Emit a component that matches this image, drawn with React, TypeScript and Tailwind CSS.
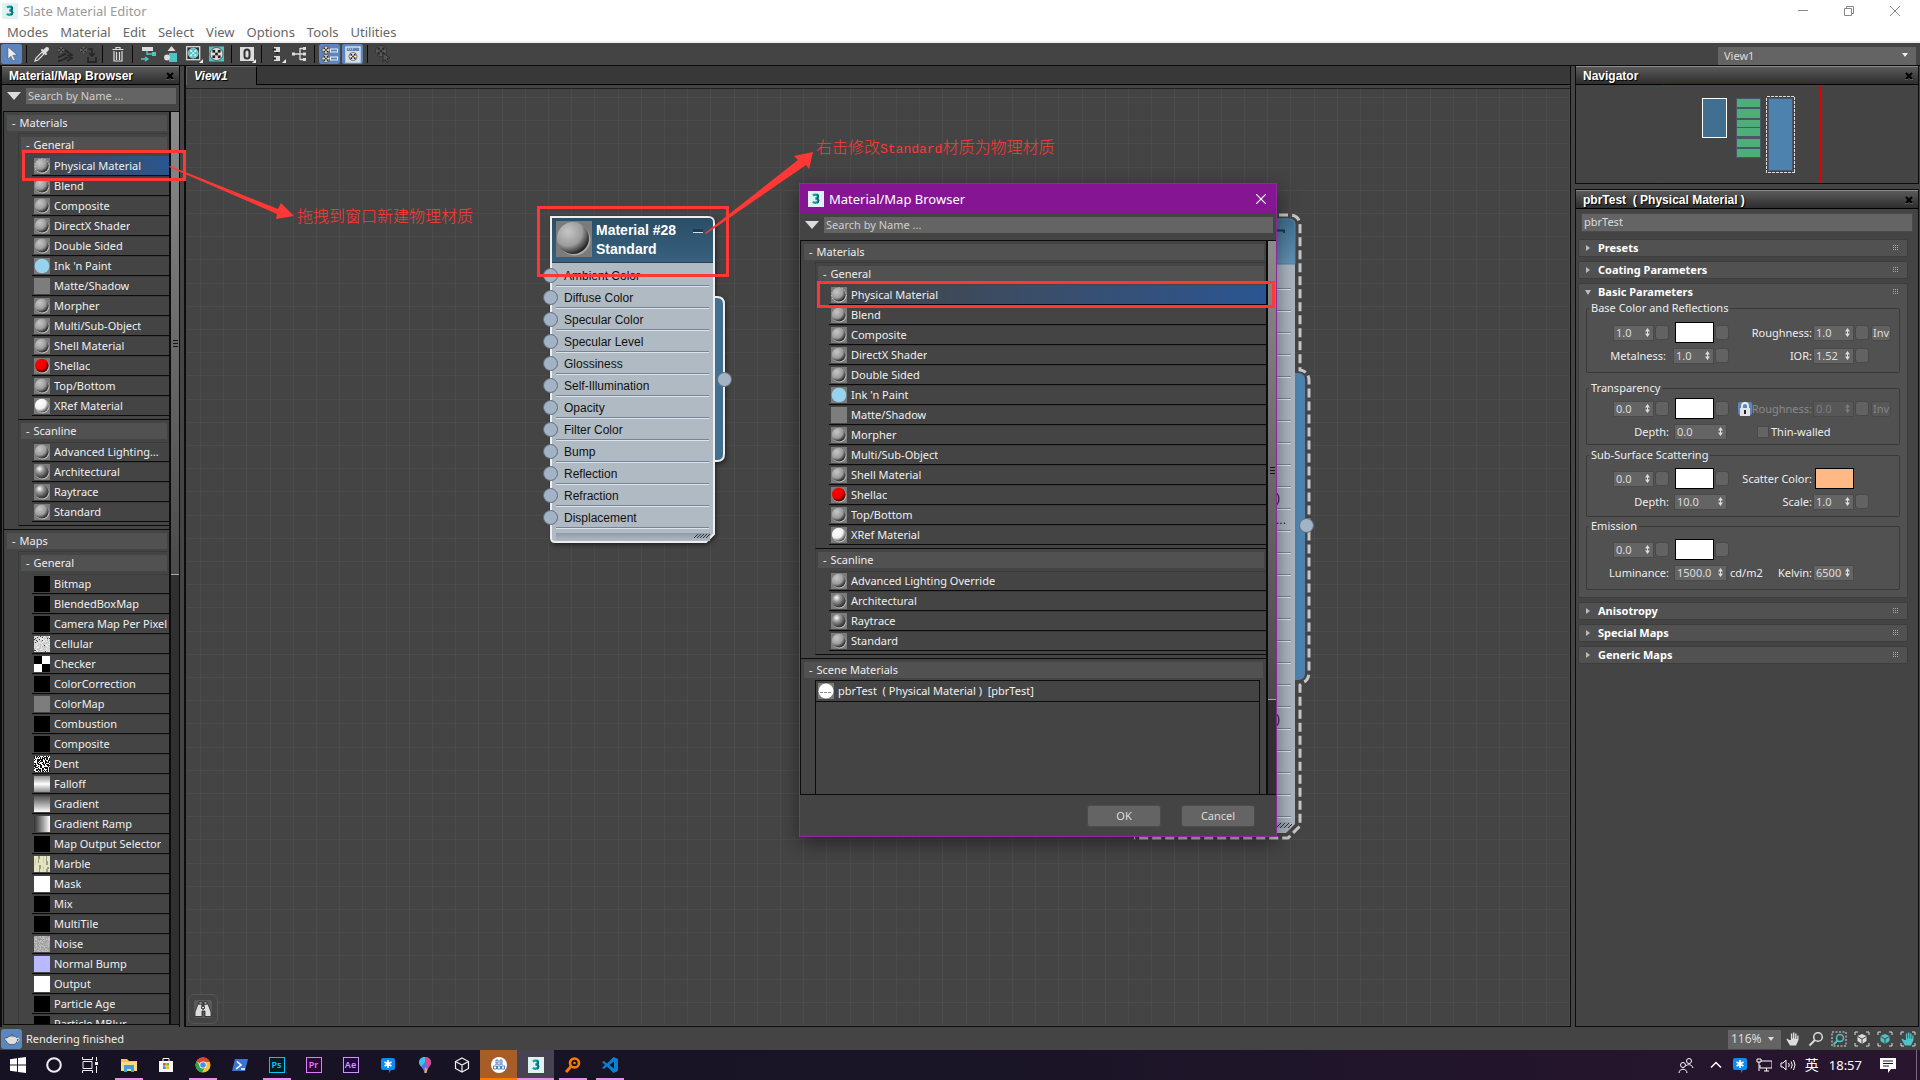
import React from "react";

const uiFont = "font-['Noto_Sans','Noto_Sans_CJK_SC',sans-serif]";
const arial = "font-['Liberation_Sans',sans-serif]";

type Item = [string, string];

const generalMaterials: Item[] = [
  ["Physical Material", "sphere-physical"],
  ["Blend", "sphere"],
  ["Composite", "sphere"],
  ["DirectX Shader", "sphere"],
  ["Double Sided", "sphere"],
  ["Ink 'n Paint", "ink"],
  ["Matte/Shadow", "gray"],
  ["Morpher", "sphere"],
  ["Multi/Sub-Object", "sphere"],
  ["Shell Material", "sphere"],
  ["Shellac", "sphere-red"],
  ["Top/Bottom", "sphere"],
  ["XRef Material", "sphere-white"],
];

const scanline = (first: string): Item[] => [
  [first, "sphere"],
  ["Architectural", "sphere-shiny"],
  ["Raytrace", "sphere-shiny"],
  ["Standard", "sphere"],
];

const maps: Item[] = [
  ["Bitmap", "black"],
  ["BlendedBoxMap", "black"],
  ["Camera Map Per Pixel", "black"],
  ["Cellular", "noise-cell"],
  ["Checker", "checker"],
  ["ColorCorrection", "black"],
  ["ColorMap", "gray"],
  ["Combustion", "black"],
  ["Composite", "black"],
  ["Dent", "noise-dent"],
  ["Falloff", "falloff"],
  ["Gradient", "gradient"],
  ["Gradient Ramp", "ramp"],
  ["Map Output Selector", "black"],
  ["Marble", "marble"],
  ["Mask", "white"],
  ["Mix", "black"],
  ["MultiTile", "black"],
  ["Noise", "noise-soft"],
  ["Normal Bump", "normal"],
  ["Output", "white"],
  ["Particle Age", "black"],
  ["Particle MBlur", "black"],
];

function Defs() {
  const ball = (id: string, a: string, b: string, c: string, mid = "0.6") => (
    <radialGradient id={id} cx="0.34" cy="0.3" r="0.74">
      <stop offset="0" stopColor={a} />
      <stop offset={mid} stopColor={b} />
      <stop offset="1" stopColor={c} />
    </radialGradient>
  );
  return (
    <svg className="absolute h-0 w-0" aria-hidden="true">
      <defs>
        {ball("ball", "#c6c6c6", "#9c9c9c", "#1c1c1c")}
        {ball("ballShiny", "#ffffff", "#9c9c9c", "#262626", "0.35")}
        {ball("ballWhite", "#ffffff", "#f0f0f0", "#444444")}
        {ball("ballRed", "#ff0000", "#ee0000", "#3a0000")}
      </defs>
    </svg>
  );
}

function Noise({ kind }: { kind: string }) {
  const cells: React.ReactElement[] = [];
  let seed = kind === "noise-dent" ? 7 : kind === "noise-cell" ? 31 : 83;
  for (let y = 0; y < 16; y++) {
    for (let x = 0; x < 16; x++) {
      seed = (seed * 48271) % 2147483647;
      const r = seed / 2147483647;
      let v = 0;
      if (kind === "noise-dent") v = r > 0.5 ? 245 : 20;
      else if (kind === "noise-cell") v = r > 0.93 ? 60 : 185 + r * 60;
      else v = 150 + r * 45;
      const g = Math.round(v);
      cells.push(<rect key={x + "-" + y} x={x} y={y} width="1" height="1" fill={`rgb(${g},${g},${g})`} />);
    }
  }
  return <>{cells}</>;
}

function Thumb({ kind }: { kind: string }) {
  const spheres: Record<string, string> = {
    sphere: "url(#ball)",
    "sphere-physical": "url(#ball)",
    "sphere-red": "url(#ballRed)",
    "sphere-white": "url(#ballWhite)",
    "sphere-shiny": "url(#ballShiny)",
  };
  if (kind === "falloff")
    return <span className="h-4 w-4 shrink-0 bg-linear-to-b from-[#8f8f8f] via-white to-[#8f8f8f]" />;
  if (kind === "gradient") return <span className="h-4 w-4 shrink-0 bg-linear-to-b from-[#555] to-white" />;
  if (kind === "ramp") return <span className="h-4 w-4 shrink-0 bg-linear-to-r from-[#333] to-white" />;
  return (
    <svg viewBox="0 0 16 16" className="h-4 w-4 shrink-0" shapeRendering={kind.startsWith("sphere") || kind === "ink" ? "auto" : "crispEdges"} aria-hidden="true">
      {kind in spheres && (
        <>
          <rect width="16" height="16" fill="#7b7b7b" />
          {kind === "sphere-physical" && <circle cx="8" cy="8" r="7.2" fill="none" stroke="#ddd" strokeDasharray="1.5 1.5" />}
          <circle cx="8.4" cy="8.4" r="7" fill="#c4c4c4" />
          <circle cx="7.8" cy="7.6" r="6.9" fill={spheres[kind]} />
        </>
      )}
      {kind === "ink" && (
        <>
          <rect width="16" height="16" fill="#7b7b7b" />
          <circle cx="8" cy="8" r="7.3" fill="#97d3ee" />
        </>
      )}
      {kind === "gray" && <rect width="16" height="16" fill="#7d7d7d" />}
      {kind === "black" && <rect width="16" height="16" fill="#000" />}
      {kind === "white" && <rect width="16" height="16" fill="#fff" />}
      {kind === "normal" && <rect width="16" height="16" fill="#b9b9ff" />}
      {kind === "checker" && (
        <>
          <rect width="16" height="16" fill="#fff" />
          <path d="M0 0h8v8H0zM8 8h8v8H8z" fill="#000" />
        </>
      )}
      {kind === "marble" && (
        <>
          <rect width="16" height="16" fill="#e4e4c0" />
          <path d="M4 0h2v3H5v4H4zM5 9h2v4H6v3H5zM12 0h1v5h1v4h-2zM13 11h2v2h-1v3h-2v-3h1z" fill="#9c9c80" />
          <path d="M1 3h1v6H1zM9 0h1v7H9zM9 10h1v5H9z" fill="#cfcfa6" />
        </>
      )}
      {kind.startsWith("noise") && <Noise kind={kind} />}
    </svg>
  );
}

function Row({ item, selected }: { item: Item; selected?: boolean }) {
  return (
    <button
      type="button"
      className={
        "flex h-5 w-full items-center border-b border-[#0c0c0c] pl-0.5 text-left " +
        (selected ? "bg-linear-to-r from-[#444] to-[#2a5592]" : "border-t border-t-[#3a3a3a]")
      }
    >
      <Thumb kind={item[1]} />
      <span className="ml-1 truncate leading-4 text-[#f0f0f0]">{item[0]}</span>
    </button>
  );
}

function Group({ title, items, selected }: { title: string; items: Item[]; selected?: boolean }) {
  return (
    <div className="border-b border-l border-[#0c0c0c] border-l-[#3a3a3a] py-[3px] pl-0.5">
      <button type="button" className="mr-0.5 flex h-4 w-[calc(100%-2px)] items-center gap-1 bg-[#515151] pl-[5px] leading-4 text-[#eee]">
        <span>-</span>
        <span>{title}</span>
      </button>
      <div className="mt-[3px] pl-[11px]">
        {items.map((it, i) => (
          <Row key={it[0]} item={it} selected={selected && i === 0} />
        ))}
      </div>
    </div>
  );
}

function Section({ title, children }: { title: string; children: React.ReactNode }) {
  return (
    <section className="border-b border-[#0c0c0c] py-[3px]">
      <button type="button" className="mx-[3px] flex h-4 w-[calc(100%-5px)] items-center gap-1 bg-[#515151] pl-[5px] leading-4 text-[#eee]">
        <span>-</span>
        <span>{title}</span>
      </button>
      <div className="mt-0.5 ml-3.5 border-t border-[#3a3a3a]">{children}</div>
    </section>
  );
}

function ScrollBar({ thumb }: { thumb: string }) {
  return (
    <div className="flex w-[9px] shrink-0 flex-col border-l border-[#0c0c0c] bg-[#303030]">
      <div className={"flex shrink-0 items-center justify-center border-b border-[#aaa] bg-linear-to-b from-[#8b8b8b] to-[#4a4a4a] " + thumb}>
        <svg viewBox="0 0 8 8" className="h-2 w-2" aria-hidden="true">
          <path d="M2 1.5h5M2 4.5h5M2 7.5h5" stroke="#111" />
        </svg>
      </div>
    </div>
  );
}

function Search({ id }: { id: string }) {
  return (
    <div className="flex h-[22px] items-center gap-[5px] pl-1">
      <button type="button" aria-label="Browser options" className="flex h-4 w-[15px] items-center justify-center">
        <svg viewBox="0 0 14 8" className="h-2 w-3.5" aria-hidden="true">
          <path d="M0 0h14L7 8z" fill="#dcdcdc" />
        </svg>
      </button>
      <input
        id={id}
        aria-label="Search by Name"
        placeholder="Search by Name ..."
        className="h-4 min-w-0 flex-1 bg-[#646464] px-0.5 leading-4 outline-none placeholder:text-[#cfcfcf]"
      />
    </div>
  );
}

function PanelTitle({ children }: { children: React.ReactNode }) {
  return (
    <header className={"flex h-[19px] shrink-0 items-center justify-between border-t border-b border-t-[#8a8a8a] border-b-black bg-linear-to-b from-[#5a5a5a] to-[#2e2e2e] pr-[3px] pl-[7px] " + arial}>
      <h2 className="text-[12px] leading-4 font-bold whitespace-pre text-white [text-shadow:1px_1px_1px_#000]">{children}</h2>
      <button type="button" aria-label="Close panel" className="flex h-3 w-3 items-center justify-center">
        <svg viewBox="0 0 8 8" className="h-2 w-2" aria-hidden="true">
          <path d="M1 1l6 6M7 1L1 7" stroke="#000" strokeWidth="2" />
          <path d="M0 7.7h3M5 7.7h3" stroke="#999" strokeWidth="0.5" />
        </svg>
      </button>
    </header>
  );
}

function MaxGlyph() {
  return (
    <>
      <rect width="16" height="16" fill="#dff1f1" />
      <path d="M5 4.6C6.2 3.4 9.6 3 9.8 5.300 9.900 7 8.500 7.400 7.200 7.400 9 7.400 10.300 8 10.200 9.700 10 12 6.500 12.200 4.800 10.900" fill="none" stroke="#11a09d" strokeWidth="2.4" />
      <path d="M9 3.200c1.800 1 1.700 3.200.3 4.200 1.700 1 1.700 3.700-.2 4.600" fill="none" stroke="#0b6a70" strokeWidth="1.6" />
    </>
  );
}

function MaxLogo() {
  return (
    <svg viewBox="0 0 16 16" className="h-4 w-4" aria-hidden="true">
      <MaxGlyph />
    </svg>
  );
}

function Sep() {
  return <span className="mx-[3px] h-[18px] w-px shrink-0 bg-[#0a0a0a]" />;
}

function Tool({ label, active, children }: { label: string; active?: boolean; children: React.ReactNode }) {
  return (
    <button type="button" aria-label={label} className={"flex h-5 w-[23px] shrink-0 items-center justify-center rounded-[3px] " + (active ? "border-x border-[#444] bg-[#5b86c0]" : "")}>
      <svg viewBox="0 0 18 18" className="h-[18px] w-[18px] shrink-0" fill="none" aria-hidden="true">
        {children}
      </svg>
    </button>
  );
}

function CheckBall({ x, y, r, on = "#ddd", off = "#222" }: { x: number; y: number; r: number; on?: string; off?: string }) {
  const k = r * 0.42;
  return (
    <g>
      <circle cx={x} cy={y} r={r} fill={on} stroke={off} strokeWidth="0.6" />
      {[[-1, -1], [1, -1], [0, 0], [-1, 1], [1, 1]].map(([a, b]) => (
        <rect key={a + "," + b} x={x + a * k - k / 2} y={y + b * k - k / 2} width={k} height={k} fill={off} />
      ))}
    </g>
  );
}

function Toolbar() {
  return (
    <div className="flex h-[22px] items-center bg-[#444] pr-1">
      <Tool label="Select" active>
        <path d="M5 2l9 8-4.2.3 2.3 4.5-2 1-2.2-4.6L5 14z" fill="#eee" stroke="#555" strokeWidth="0.5" />
      </Tool>
      <Sep />
      <Tool label="Pick material">
        <path d="M2 16l1-3 6-6 2 2-6 6z" stroke="#ddd" strokeWidth="1.2" />
        <path d="M9 5l4 4" stroke="#ddd" strokeWidth="2" strokeLinecap="round" />
        <path d="M11.5 6.5L14 4" stroke="#ddd" strokeWidth="4" strokeLinecap="round" />
      </Tool>
      <Tool label="Put to scene">
        <CheckBall x={5} y={5} r={4} on="#666" off="#262626" />
        <path d="M2 16c5 0 6-3 9-3M2 12c4 0 5-3 8-3M9 5l4 3M10 6l6 4-6 3M11 10l5 3-5 3" stroke="#262626" strokeWidth="1.8" />
      </Tool>
      <Tool label="Assign to selection">
        <CheckBall x={4.500} y={5} r={4} on="#666" off="#262626" />
        <path d="M9 4h4v6M10 8l3 3 3-3" stroke="#262626" strokeWidth="1.6" />
        <path d="M9 12v5h8V12" stroke="#262626" strokeWidth="1.8" />
      </Tool>
      <Sep />
      <Tool label="Delete">
        <path d="M3.5 4.500h11M7 4V2.500h4V4M5 6v10h8V6M7.500 7v8M10.500 7v8" stroke="#ddd" strokeWidth="1.2" />
      </Tool>
      <Sep />
      <Tool label="Move children">
        <path d="M3 2h11v4H3z" fill="#ddd" />
        <path d="M8 6v4M8 9h5M2 14h6M6 12l3 2-3 2" stroke="#4fc3c3" strokeWidth="1.4" />
        <path d="M13 7h4v4h-4z" fill="#4fc3c3" />
      </Tool>
      <Tool label="Hide unused slots">
        <path d="M9.500 1l4 5h-8z" fill="#ddd" />
        <path d="M7 8h8v9H7z" fill="#4fc3c3" />
        <circle cx="5" cy="12.500" r="3" fill="#ddd" />
      </Tool>
      <Tool label="Show shaded material">
        <rect x="1.700" y="1.700" width="13" height="13" fill="#333" stroke="#ddd" strokeWidth="1.300" />
        <CheckBall x={8.200} y={8.200} r={5} on="#4fc3c3" off="#c8f0f0" />
        <path d="M18 14v4h-4z" fill="#eee" />
      </Tool>
      <Tool label="Show background">
        <rect x="1" y="1.500" width="15" height="15" fill="#4fc3c3" />
        <CheckBall x={8.500} y={9} r={6.500} on="#ddd" off="#222" />
      </Tool>
      <Sep />
      <Tool label="Material ID channel">
        <rect x="2" y="2" width="14" height="14" fill="#ddd" />
        <rect x="6.500" y="4.500" width="5" height="9" rx="2.500" stroke="#333" strokeWidth="2" />
        <path d="M18 14v4h-4z" fill="#eee" />
      </Tool>
      <Sep />
      <Tool label="Lay out all">
        <path d="M6 2h6v5H6zM6 11h6v5H6z" fill="#ddd" />
        <path d="M5 4.500h3M5 13.500h3M9 7v2" stroke="#222" strokeWidth="2" />
        <path d="M18 14v4h-4z" fill="#eee" />
      </Tool>
      <Tool label="Lay out children">
        <path d="M3 9h6M9 3.500h3M9 9h3M9 14.500h3M9 3v12" stroke="#ddd" strokeWidth="1.300" />
        <path d="M1 7.500h3v3H1zM12 2h3v3h-3zM12 7.500h3v3h-3zM12 13h3v3h-3z" fill="#ddd" />
      </Tool>
      <Sep />
      <Tool label="Material/Map Browser" active>
        <CheckBall x={5} y={5} r={4} />
        <CheckBall x={5} y={13.500} r={4} />
        <rect x="9.500" y="4" width="7" height="3" stroke="#eee" />
        <rect x="9.500" y="12" width="7" height="3" stroke="#eee" />
      </Tool>
      <Tool label="Parameter Editor" active>
        <rect x="2" y="2" width="14" height="15" stroke="#eee" strokeWidth="1.300" />
        <path d="M2 6h14v11H2z" fill="#ddd" />
        <path d="M4 4h6" stroke="#eee" strokeDasharray="1 1" />
        <CheckBall x={9} y={11.500} r={4} on="#eee" off="#222" />
      </Tool>
      <Sep />
      <Tool label="Select by material">
        <CheckBall x={7} y={6} r={5.500} on="#5a5a5a" off="#262626" />
        <path d="M9 8l7 5-3 .5 1.500 3-1.500 1-2-3-2 2z" fill="#555" stroke="#2b2b2b" />
      </Tool>
      <div className="relative ml-auto h-[18px] w-[198px] self-end">
        <select aria-label="View" className="h-full w-full appearance-none bg-[#646464] pl-1.5 text-[11px] leading-4 text-[#ddd]">
          <option>View1</option>
        </select>
        <svg viewBox="0 0 6 4" className="pointer-events-none absolute top-1.5 right-2 h-1 w-1.5" aria-hidden="true">
          <path d="M0 0h6L3 4z" fill="#eee" />
        </svg>
      </div>
    </div>
  );
}

const slots = ["Ambient Color", "Diffuse Color", "Specular Color", "Specular Level", "Glossiness", "Self-Illumination", "Opacity", "Filter Color", "Bump", "Reflection", "Refraction", "Displacement"];

function Pin({ className }: { className: string }) {
  return <span className={"absolute h-[15px] w-[15px] rounded-full border border-[#5c6b7d] bg-[#a3b3c6] " + className} />;
}

function StandardNode() {
  return (
    <article className={"absolute top-[126px] left-[363px] w-[176px] " + arial}>
      <svg viewBox="0 0 180 332" className="absolute top-0 left-0 h-[332px] w-[180px] drop-shadow-[1px_2px_2px_#222]" aria-hidden="true">
        <path d="M163 82h5q7 0 7 7v150q0 7-7 7h-5z" fill="#416f8f" stroke="#eee" strokeWidth="2" />
        <path d="M2 2h157q6 0 6 6v311l-8 8H6q-4 0-4-4z" fill="#b0bac3" stroke="#eee" strokeWidth="2" />
      </svg>
      <div className="relative px-[3px] pt-[3px]">
        <div className="flex h-[45px] w-[161px] rounded-tr-[4px] border-b border-[#333d48] bg-linear-to-b from-[#2b4e66] to-[#37617f] pt-[3px] pl-1">
          <svg viewBox="0 0 36 36" className="h-9 w-9 shrink-0" aria-hidden="true">
            <rect width="36" height="36" fill="#7b7b7b" />
            <circle cx="18.500" cy="18.500" r="16" fill="#a8a8a8" />
            <circle cx="17" cy="17" r="16" fill="url(#ball)" />
          </svg>
          <div className="ml-1 text-[14px] leading-[19px] font-bold whitespace-nowrap text-white">
            <div>Material #28</div>
            <div>Standard</div>
          </div>
          <span className="mt-2 mr-2.5 ml-auto h-1 w-2.5 border-b border-[#cfe0ea] bg-[#1c3c52]" />
        </div>
        <ul className="mt-0.5 w-[161px]">
          {slots.map((s) => (
            <li key={s} className="relative h-[22px] px-1">
              <Pin className="top-[3px] -left-[9px]" />
              <div className="flex h-full items-center border-b border-[#dde3e9] pl-2 text-[12px] leading-4 text-[#111] shadow-[inset_0_-1px_0_#76839a]">{s}</div>
            </li>
          ))}
        </ul>
        <div className="mx-1 mt-1 flex h-2 w-[154px] justify-end bg-linear-to-b from-[#8f9bab] to-[#b0bac3]">
          <svg viewBox="0 0 16 6" className="h-1.5 w-4" aria-hidden="true">
            <path d="M0 5l4-4M3 5l4-4M6 5l4-4M9 5l4-4M12 5l4-4" stroke="#333" />
          </svg>
        </div>
      </div>
      <Pin className="top-[157px] left-[168px]" />
    </article>
  );
}

function PhysicalNode() {
  const lines = Array.from({ length: 25 }, (_, i) => i);
  return (
    <article className={"absolute top-[124px] left-[944px] w-[184px] " + arial}>
      <svg viewBox="0 0 184 630" className="h-[630px] w-[184px]" fill="none" aria-hidden="true">
        <defs>
          <linearGradient id="nodeHead" x1="0" y1="0" x2="0" y2="1">
            <stop offset="0" stopColor="#3f6d8c" />
            <stop offset="1" stopColor="#6392b4" />
          </linearGradient>
        </defs>
        <path d="M6 2h153q11 0 11 11v144q9 1 9 11v290q0 9-5 11l-4 3v141l-12 12H4" stroke="#c6c6c6" strokeWidth="3" strokeDasharray="9 4" />
        <path d="M165 160h3q7 0 7 7v293q0 7-7 7h-3z" fill="#4c82ad" />
        <path d="M0 6h159q6 0 6 6v599l-9 9H0z" fill="#aab4bf" />
        <path d="M0 6h159q6 0 6 6v39H0z" fill="url(#nodeHead)" stroke="#4c82ad" />
        <path d="M146 17.5h8v2.500" stroke="#1b3547" strokeWidth="2" />
        {lines.map((i) => (
          <g key={i}>
            <path d={`M0 ${75.5 + i * 22}h161`} stroke="#76839a" />
            <path d={`M0 ${76.5 + i * 22}h161`} stroke="#dde3e9" />
          </g>
        ))}
        <path d="M0 609h160v6H0z" fill="#9aa6b5" />
        <path d="M146 615l5-5M150 615l5-5M154 615l5-5M158 615l4-4" stroke="#333" />
      </svg>
      <span className="absolute top-[277px] left-[146px] text-[12px] leading-4 text-[#111]">)</span>
      <span className="absolute top-[299px] left-[146px] text-[12px] leading-4 text-[#111]">...</span>
      <span className="absolute top-[498px] left-[146px] text-[12px] leading-4 text-[#111]">)</span>
      <Pin className="top-[305px] left-[169px]" />
    </article>
  );
}

function Canvas() {
  const ticks = [0, 23, 46, 70, 93];
  return (
    <div className="relative min-h-0 flex-1 overflow-hidden border-t border-[#222] bg-[#444]">
      <svg className="absolute inset-0 h-full w-full" aria-hidden="true">
        <defs>
          <pattern id="grid" x="14" y="8" width="116" height="116" patternUnits="userSpaceOnUse">
            {ticks.map((t) => (
              <path key={t} d={`M${t + 0.5} 0v116M0 ${t + 0.5}h116`} stroke="#4b4b4b" />
            ))}
          </pattern>
        </defs>
        <rect width="100%" height="100%" fill="url(#grid)" />
      </svg>
      <StandardNode />
      <PhysicalNode />
      <button type="button" aria-label="Search nodes" className="absolute bottom-0.5 left-0.5 flex h-[30px] w-[30px] items-center justify-center rounded-md border border-[#555] bg-[#444]">
        <svg viewBox="0 0 18 18" className="h-[18px] w-[18px]" aria-hidden="true">
          <rect width="18" height="18" rx="2" fill="#5a5a5a" />
          <path d="M1 16.500V12L4 4h4v5h2V4h4l3 8v4.500h-6V11H8v5.500z" fill="#ddd" stroke="#222" strokeWidth="0.800" />
          <path d="M5 2h3v2H5zM10 2h3v2h-3z" fill="#ddd" stroke="#222" strokeWidth="0.800" />
          <circle cx="9" cy="7.500" r="1.500" fill="#ddd" stroke="#222" />
        </svg>
      </button>
    </div>
  );
}

function Navigator() {
  return (
    <svg viewBox="0 0 342 98" className="h-[98px] w-full" preserveAspectRatio="xMinYMin" fill="none" aria-hidden="true" shapeRendering="crispEdges">
      <path d="M85.500 99V.5h159V99" stroke="#e60000" />
      <rect x="126.500" y="13.500" width="24" height="39" fill="#416f8f" stroke="#fff" />
      <rect x="160" y="13" width="25" height="60" fill="#4a5568" />
      <path d="M161 14h23v8h-23zM161 24h23v9h-23zM161 35h23v7h-23zM161 43h23v8h-23zM161 54h23v8h-23zM161 64h23v8h-23z" fill="#4dae79" />
      <rect x="190.500" y="11.500" width="28" height="76" stroke="#ddd" strokeDasharray="3 1" />
      <rect x="192.500" y="13.500" width="24" height="72" fill="#4c82ad" stroke="#4a5568" />
    </svg>
  );
}

function Spinner({ label, value, wide, disabled }: { label: string; value: string; wide?: boolean; disabled?: boolean }) {
  return (
    <span className={"flex h-4 items-center border border-[#4a4a4a] " + (wide ? "w-[53px] " : "w-[41px] ") + (disabled ? "bg-[#575757] text-[#7d7d7d]" : "bg-[#646464] text-[#ddd]")}>
      <input aria-label={label} defaultValue={value} disabled={disabled} className="h-full w-0 min-w-0 flex-1 bg-transparent pl-0.5 text-[11px] leading-3 outline-none" />
      <svg viewBox="0 0 5 9" className="mr-[3px] h-[9px] w-[5px]" fill="currentColor" aria-hidden="true">
        <path d="M0 3.500L2.500 0 5 3.500zM0 5.500h5L2.500 9zM2 3h1v3H2z" />
      </svg>
    </span>
  );
}

function MapButton({ label }: { label: string }) {
  return <button type="button" aria-label={label} className="h-[15px] w-3.5 rounded-[3px] border border-[#494949] bg-[#626262]" />;
}

function Swatch({ label, className }: { label: string; className: string }) {
  return <button type="button" aria-label={label} className={"h-[21px] w-[39px] border border-black " + className} />;
}

function ParamRow({ left, leftTag, right, rightLabel, dim }: { left: React.ReactNode; leftTag?: React.ReactNode; right: React.ReactNode; rightLabel?: string; dim?: boolean }) {
  return (
    <div className="flex h-[23px] items-center">
      <div className="flex w-[142px] items-center justify-end gap-px">{left}</div>
      <div className={"flex w-[84px] items-center justify-end pr-px " + (dim ? "text-[#8a8a8a]" : "")}>
        {leftTag}
        {rightLabel && <span className="whitespace-nowrap">{rightLabel}</span>}
      </div>
      <div className="flex items-center gap-px">{right}</div>
    </div>
  );
}

function WeightColor({ name, value }: { name: string; value: string }) {
  return (
    <>
      <Spinner label={name + " weight"} value={value} />
      <MapButton label={name + " weight map"} />
      <span className="w-1" />
      <Swatch label={name + " color"} className="bg-white" />
      <MapButton label={name + " color map"} />
    </>
  );
}

function InvButton({ dim }: { dim?: boolean }) {
  return (
    <button type="button" className={"ml-px h-4 w-5 rounded-[3px] border border-[#494949] text-[11px] leading-3 " + (dim ? "bg-[#575757] text-[#858585]" : "bg-[#626262] text-[#ddd]")}>
      Inv
    </button>
  );
}

function Rollout({ title, open, children }: { title: string; open?: boolean; children?: React.ReactNode }) {
  return (
    <section className="rounded-[2px] border border-[#3d3d3d] bg-[#515151]">
      <button type="button" className="flex h-4 w-full items-center pr-2 pl-1.5 text-left">
        <svg viewBox="0 0 6 6" className="h-1.5 w-1.5" aria-hidden="true">
          <path d={open ? "M0 1h6L3 6z" : "M1 0l4 3-4 3z"} fill="#bbb" />
        </svg>
        <span className="ml-[7px] text-[11px] leading-4 font-bold text-white">{title}</span>
        <svg viewBox="0 0 6 6" className="ml-auto h-1.5 w-1.5" aria-hidden="true">
          <path d="M0 0h1v1H0zM2 0h1v1H2zM4 0h1v1H4zM0 2h1v1H0zM2 2h1v1H2zM4 2h1v1H4zM0 4h1v1H0zM2 4h1v1H2zM4 4h1v1H4z" fill="#aaa" />
        </svg>
      </button>
      {children}
    </section>
  );
}

function Params() {
  const box = "mx-[7px] rounded-[2px] border border-[#3a3a3a] text-[#eee]";
  const legend = "ml-0.5 px-0.5 leading-4";
  return (
    <div className="flex flex-col gap-1 pr-2.5 pl-0.5">
      <Rollout title="Presets" />
      <Rollout title="Coating Parameters" />
      <Rollout title="Basic Parameters" open>
        <div className="pb-[7px]">
          <fieldset className={box + " py-[5px]"}>
            <legend className={legend}>Base Color and Reflections</legend>
            <ParamRow
              left={<WeightColor name="Base" value="1.0" />}
              rightLabel="Roughness:"
              right={<><Spinner label="Roughness" value="1.0" /><MapButton label="Roughness map" /><InvButton /></>}
            />
            <ParamRow
              left={<><span className="mr-1.5">Metalness:</span><Spinner label="Metalness" value="1.0" /><MapButton label="Metalness map" /></>}
              rightLabel="IOR:"
              right={<><Spinner label="IOR" value="1.52" /><MapButton label="IOR map" /></>}
            />
          </fieldset>
          <fieldset className={box + " mt-[7px] py-px"}>
            <legend className={legend}>Transparency</legend>
            <ParamRow
              left={<WeightColor name="Transparency" value="0.0" />}
              dim
              leftTag={
                <button type="button" aria-label="Lock roughness" className="mr-auto ml-[9px] h-3.5 w-3.5 shrink-0">
                  <svg viewBox="0 0 14 14" className="h-3.5 w-3.5" aria-hidden="true">
                    <rect width="14" height="13" rx="2" fill="#5b86c0" />
                    <path d="M4 7V4q0-3 3-3t3 3v3" stroke="#eee" strokeWidth="1.800" fill="none" />
                    <path d="M2 6h10v8H2z" fill="#e4e4e4" />
                    <path d="M6 8h2v4H6z" fill="#222" />
                  </svg>
                </button>
              }
              rightLabel="Roughness:"
              right={<><Spinner label="Transparency roughness" value="0.0" disabled /><MapButton label="Transparency roughness map" /><InvButton dim /></>}
            />
            <ParamRow
              left={<><span className="mr-1">Depth:</span><Spinner label="Transparency depth" value="0.0" wide /><span className="w-px" /></>}
              right={
                <label className="-ml-14 flex items-center gap-0.5">
                  <input type="checkbox" className="h-3 w-3 appearance-none border border-[#494949] bg-[#646464]" />
                  Thin-walled
                </label>
              }
            />
          </fieldset>
          <fieldset className={box + " mt-0.5 pt-1 pb-[3px]"}>
            <legend className={legend}>Sub-Surface Scattering</legend>
            <ParamRow
              left={<WeightColor name="Scattering" value="0.0" />}
              rightLabel="Scatter Color:"
              right={<><span className="w-px" /><Swatch label="Scatter color" className="bg-[#ffb985]" /></>}
            />
            <ParamRow
              left={<><span className="mr-1">Depth:</span><Spinner label="Scattering depth" value="10.0" wide /><span className="w-px" /></>}
              rightLabel="Scale:"
              right={<><Spinner label="Scale" value="1.0" /><MapButton label="Scale map" /></>}
            />
          </fieldset>
          <fieldset className={box + " mt-px pt-1 pb-[5px]"}>
            <legend className={legend}>Emission</legend>
            <ParamRow left={<WeightColor name="Emission" value="0.0" />} right={null} />
            <ParamRow
              left={<><span className="mr-1">Luminance:</span><Spinner label="Luminance" value="1500.0" wide /><span className="w-px" /></>}
              leftTag={<span className="mr-auto ml-px">cd/m2</span>}
              rightLabel="Kelvin:"
              right={<Spinner label="Kelvin" value="6500" />}
            />
          </fieldset>
        </div>
      </Rollout>
      <Rollout title="Anisotropy" />
      <Rollout title="Special Maps" />
      <Rollout title="Generic Maps" />
    </div>
  );
}

function Dialog() {
  return (
    <div role="dialog" aria-label="Material/Map Browser" className="absolute top-[183px] left-[799px] flex h-[654px] w-[478px] flex-col border border-[#8b2a99] bg-[#444] shadow-[0_6px_18px_rgba(0,0,0,0.45)]">
      <header className="flex h-[30px] shrink-0 items-center bg-[#861593] pr-2.5 pb-px pl-2">
        <MaxLogo />
        <h2 className="ml-[5px] text-[13px] leading-4 text-white">Material/Map Browser</h2>
        <button type="button" aria-label="Close" className="ml-auto">
          <svg viewBox="0 0 10 10" className="h-2.5 w-2.5" aria-hidden="true">
            <path d="M0 0l10 10M10 0L0 10" stroke="#fff" strokeWidth="1.2" />
          </svg>
        </button>
      </header>
      <div className="shrink-0 pr-[3px] pb-1">
        <Search id="dialog-search" />
      </div>
      <div className="flex min-h-0 flex-1 overflow-hidden border-y border-l border-[#0c0c0c]">
        <div className="flex min-w-0 flex-1 flex-col border-r border-[#0c0c0c]">
          <Section title="Materials">
            <Group title="General" items={generalMaterials} selected />
            <Group title="Scanline" items={scanline("Advanced Lighting Override")} />
          </Section>
          <button type="button" className="mx-[3px] mt-[3px] flex h-4 shrink-0 items-center gap-1 bg-[#515151] pl-[5px] leading-4 text-[#eee]">
            <span>-</span>
            <span>Scene Materials</span>
          </button>
          <div className="mt-0.5 mr-1.5 ml-3.5 flex-1 border-x border-t border-[#0c0c0c]">
            <button type="button" className="flex h-[21px] w-full items-center border-b border-[#0c0c0c] pl-0.5 text-left text-[#f0f0f0]">
              <svg viewBox="0 0 16 16" className="h-4 w-4" aria-hidden="true">
                <rect width="16" height="16" fill="#7b7b7b" />
                <circle cx="8" cy="8" r="7.500" fill="#fff" />
                <path d="M2 9.500h12" stroke="#888" strokeDasharray="3 1" />
              </svg>
              <span className="ml-1 whitespace-pre">pbrTest  ( Physical Material )  [pbrTest]</span>
            </button>
          </div>
        </div>
        <ScrollBar thumb="h-[459px]" />
      </div>
      <div className="flex h-[41px] shrink-0 items-center justify-end gap-5 pr-[21px]">
        <button type="button" className="h-[22px] w-[74px] rounded-[3px] border border-[#4c4c4c] bg-[#646464] text-[11px] leading-4 text-[#ddd]">OK</button>
        <button type="button" className="h-[22px] w-[74px] rounded-[3px] border border-[#4c4c4c] bg-[#646464] text-[11px] leading-4 text-[#ddd]">Cancel</button>
      </div>
    </div>
  );
}

function StatusIcon({ label, children }: { label: string; children: React.ReactNode }) {
  return (
    <button type="button" aria-label={label} className="flex w-[23px] items-center justify-center">
      <svg viewBox="0 0 16 16" className="h-4 w-4" fill="none" aria-hidden="true">{children}</svg>
    </button>
  );
}

function StatusBar() {
  const corners = "M1 4V1h3M12 1h3v3M15 12v3h-3M4 15H1v-3";
  const cube = "M8 3l4.5 2v5L8 13l-4.500-3V5z";
  const hand = "M4 9L2.500 7.500 1.500 8.500 5 14.500h6L13.500 9V4.500h-1.300V8h-.7V2.500h-1.400V7.500h-.7V1.500H8V7.500h-.7V2.500H5.900V9z";
  return (
    <footer className="flex h-[22px] shrink-0 items-center bg-[#444] pr-px">
      <button type="button" aria-label="Render" className="ml-px flex h-5 w-[21px] items-center justify-center rounded-[3px] bg-[#5b86c0]">
        <svg viewBox="0 0 18 12" className="h-3 w-[18px]" aria-hidden="true">
          <path d="M4 5c1-1.500 3-2 5-2s5 .8 5.500 2.500C15 8 13 11 11 11.500H7C5.500 11 4.500 10 4 9L1 5.500 2.500 5zM8 2.500L9 1l1 1.500" fill="#ddd" stroke="#333" strokeWidth="0.600" />
          <path d="M14 5.500c3-1 3 2 0 3.500" stroke="#ddd" fill="none" />
        </svg>
      </button>
      <span className="ml-1 text-[11px] leading-4 text-[#eee]">Rendering finished</span>
      <div className="relative ml-auto h-[19px] w-[53px]">
        <select aria-label="Zoom" className="h-full w-full appearance-none bg-[#646464] pl-[3px] text-[12px] leading-4 text-[#ddd]">
          <option>116%</option>
        </select>
        <svg viewBox="0 0 6 4" className="pointer-events-none absolute top-[7px] right-[7px] h-1 w-1.5" aria-hidden="true">
          <path d="M0 0h6L3 4z" fill="#ddd" />
        </svg>
      </div>
      <StatusIcon label="Pan"><path d={hand} fill="#ddd" /></StatusIcon>
      <StatusIcon label="Zoom tool">
        <circle cx="10" cy="6" r="4.300" stroke="#ddd" strokeWidth="1.500" />
        <path d="M7 9l-5.500 5.500" stroke="#ddd" strokeWidth="2" />
      </StatusIcon>
      <StatusIcon label="Zoom region">
        <rect x="1" y="1" width="14" height="14" stroke="#ddd" strokeDasharray="2 1.500" />
        <circle cx="9" cy="7" r="3.500" stroke="#4fc3c3" strokeWidth="1.500" />
        <path d="M6.500 9.500L2.500 13.500" stroke="#4fc3c3" strokeWidth="2" />
      </StatusIcon>
      <StatusIcon label="Zoom extents">
        <path d={corners} stroke="#ddd" />
        <path d={cube} fill="#ddd" />
        <path d="M3.500 5.500L8 8l4.500-2.500M8 8v5" stroke="#444" />
      </StatusIcon>
      <StatusIcon label="Zoom extents selected">
        <path d={corners} stroke="#ddd" />
        <path d={cube} fill="#4fc3c3" />
        <path d="M3.500 5.500L8 8l4.500-2.500M8 8v5" stroke="#444" />
      </StatusIcon>
      <StatusIcon label="Pan to selected">
        <path d={corners} stroke="#ddd" />
        <path d={hand} fill="#4fc3c3" />
      </StatusIcon>
    </footer>
  );
}

function TaskButton({ label, state, wide, children }: { label: string; state?: "run" | "front" | "alert"; wide?: boolean; children: React.ReactNode }) {
  const bg = state === "alert" ? "bg-[#a65d28]" : state === "front" ? "bg-[#474353]" : "";
  const bar = state === "alert" ? "w-full bg-[#ff7a00]" : state === "front" ? "w-full bg-[#e58fee]" : state === "run" ? "w-7 bg-[#e58fee]" : "w-0";
  return (
    <button type="button" aria-label={label} className={"flex h-[30px] flex-col items-center justify-between " + (wide ? "w-9 " : "w-[37px] ") + bg}>
      <svg viewBox="0 0 16 16" className="mt-[7px] h-4 w-4" fill="none" aria-hidden="true">{children}</svg>
      <span className={"h-0.5 " + bar} />
    </button>
  );
}

function AdobeButton({ text, className, run }: { text: string; className: string; run?: boolean }) {
  return (
    <button type="button" className="flex h-[30px] w-[37px] flex-col items-center justify-between">
      <span className={"mt-[7px] flex h-4 w-4 items-center justify-center border text-[9px] leading-3 font-semibold " + className}>{text}</span>
      <span className={"h-0.5 w-7 " + (run ? "bg-[#e58fee]" : "")} />
    </button>
  );
}

function StarIcon() {
  return (
    <>
      <path d="M3 1h10q2 0 2 2v8q0 2-2 2h-2l-2 3v-3H3q-2 0-2-2V3q0-2 2-2z" fill="#0a8cf5" />
      <path d="M8 3v8M4.500 5l7 4M11.500 5l-7 4" stroke="#fff" strokeWidth="1.800" />
    </>
  );
}

function Taskbar() {
  return (
    <nav className="flex h-[30px] shrink-0 items-center bg-linear-to-r from-[#161224] via-[#191426] to-[#29152f]">
      <TaskButton label="Start" wide><path d="M0 2.300L7 1.300V7.500H0zM8 1.100L16 0v7.500H8zM0 8.500h7v6.200l-7-1zM8 8.500h8V16l-8-1.100z" fill="#fff" /></TaskButton>
      <TaskButton label="Cortana" wide><circle cx="8" cy="8" r="6.800" stroke="#eee" strokeWidth="2" /></TaskButton>
      <TaskButton label="Task view" wide>
        <path d="M1 4.500h9v7H1zM.5 0v2.500h10V0M.5 16v-2.500h10V16M14.500 0v4M14.500 9v7" stroke="#eee" />
        <path d="M13 5h3v3h-3z" fill="#eee" />
      </TaskButton>
      <span className="w-0.5" />
      <TaskButton label="File Explorer" state="run">
        <path d="M0 2h6l2 2h8v10H0z" fill="#f3c64f" />
        <path d="M0 5h16v9H0z" fill="#fbdc7d" />
        <path d="M3 8h10v7h-3v-3H6v3H3z" fill="#3f9fe0" />
      </TaskButton>
      <TaskButton label="Store">
        <path d="M1 4h14v11H1z" fill="#f5f5f5" />
        <path d="M5 4V1.500h6V4" stroke="#f5f5f5" />
        <path d="M5 6h2.700v2.700H5z" fill="#e8502c" /><path d="M8.300 6H11v2.700H8.300z" fill="#7cb518" /><path d="M5 9.300h2.700V12H5z" fill="#1ba1e2" /><path d="M8.300 9.300H11V12H8.300z" fill="#f6b90a" />
      </TaskButton>
      <TaskButton label="Chrome" state="run">
        <circle cx="8" cy="8" r="7.500" fill="#f4c430" />
        <path d="M8 8L1.500 4.300A7.500 7.500 0 0 1 14.800 5H8z" fill="#dc4437" />
        <path d="M1.500 4.300A7.500 7.500 0 0 0 7 15.400L10 10 5 9z" fill="#2ba24c" />
        <circle cx="8" cy="8" r="3.600" fill="#fff" /><circle cx="8" cy="8" r="2.800" fill="#4a8af4" />
      </TaskButton>
      <TaskButton label="PowerShell">
        <path d="M3 2h13l-3 12H0z" fill="#3c74d4" />
        <path d="M5 4.500l4 3.500-5 4M9 12h4" stroke="#fff" strokeWidth="1.600" />
      </TaskButton>
      <AdobeButton text="Ps" run className="border-[#00c8ff] bg-[#001d26] text-[#00c8ff]" />
      <AdobeButton text="Pr" className="border-[#e878ff] bg-[#2a0634] text-[#e878ff]" />
      <AdobeButton text="Ae" className="border-[#cf96fd] bg-[#1f0640] text-[#cf96fd]" />
      <TaskButton label="Star"><StarIcon /></TaskButton>
      <TaskButton label="Paint 3D">
        <path d="M8 0c4 0 6 2.500 6 5.500C14 9 10 11 9.500 16h-2C7 11 2 9 2 5.500 2 2.500 4 0 8 0z" fill="#5b6ee8" />
        <path d="M8 0c4 0 6 2.500 6 5.500 0 2-1.500 3.500-2.700 5.500L8 5z" fill="#e0458f" />
        <path d="M2 5.500C2 2.500 4 0 8 0v5L4.500 9.500C3 8.300 2 7 2 5.500z" fill="#39c3e8" />
        <path d="M8 10l2.500 2L9.500 16h-2z" fill="#f2a33c" />
      </TaskButton>
      <TaskButton label="3D Viewer"><path d="M8 1l6.500 3.500v7L8 15l-6.500-3.500v-7zM1.500 4.500L8 8l6.500-3.500M8 8v7" stroke="#eee" strokeWidth="1.200" /></TaskButton>
      <TaskButton label="Chat" state="alert">
        <circle cx="8" cy="8" r="8" fill="#fff" />
        <path d="M5 3h2v3H5zM9 3h2v3H9zM2.500 9h3v3h-3zM6.500 9h3v3h-3zM10.500 9h3v3h-3zM4 7.200h8" stroke="#3a78b8" strokeWidth="0.900" />
      </TaskButton>
      <TaskButton label="3ds Max" state="front"><MaxGlyph /></TaskButton>
      <TaskButton label="Search tool" state="run">
        <circle cx="9.500" cy="6" r="4.500" stroke="#ff7a00" strokeWidth="2.600" />
        <circle cx="9.500" cy="6" r="1.300" fill="#ff7a00" />
        <path d="M6 9.500L1 15" stroke="#ff7a00" strokeWidth="2.800" />
      </TaskButton>
      <TaskButton label="Visual Studio Code" state="run">
        <path d="M11.500 0L16 2v12l-4.500 2L5 9.500 2 12 0 11l3-3-3-3 2-1 3 2.500zM12 4.500L7.500 8l4.500 3.500z" fill="#0b7fd0" fillRule="evenodd" />
      </TaskButton>
      <div className="ml-auto flex items-center text-white">
        <TrayIcon>
          <circle cx="11" cy="4" r="2.500" /><path d="M8 9c1-2 6-2 7 2" /><circle cx="5" cy="8" r="2.500" /><path d="M1 16c0-5 8-5 8 0" />
        </TrayIcon>
        <span className="w-1.5" />
        <TrayIcon><path d="M3 10.500l5-5 5 5" strokeWidth="1.500" /></TrayIcon>
        <TrayIcon><g stroke="none"><StarIcon /></g></TrayIcon>
        <TrayIcon><path d="M5 4h11v7H4V8M8 14h5M10.500 11v3M1 2h4v3H1zM3 5v9" /></TrayIcon>
        <TrayIcon><path d="M1 6h2l3-3v10l-3-3H1zM8.500 6q1.500 2 0 4M11 4.500q2.500 3.500 0 7M13.500 3q3 5 0 10" /></TrayIcon>
        <span className="w-6 text-center text-[14px] leading-4">英</span>
        <time className="ml-[5px] text-[13px] leading-4">18:57</time>
        <svg viewBox="0 0 16 16" className="mr-5 ml-[18px] h-4 w-4" aria-hidden="true">
          <path d="M0 1h16v11h-5l-3 4v-4H0z" fill="#fff" />
          <path d="M3 4h10M3 6.500h10M3 9h6" stroke="#221530" />
        </svg>
        <span className="mr-[3px] h-[30px] w-px bg-[#7a6c80]" />
      </div>
    </nav>
  );
}

function TrayIcon({ children }: { children: React.ReactNode }) {
  return (
    <span className="flex w-6 justify-center">
      <svg viewBox="0 0 16 16" className="h-4 w-4" fill="none" stroke="#fff" aria-hidden="true">{children}</svg>
    </span>
  );
}

function Annotations() {
  const note = "absolute text-[16px] leading-5 whitespace-nowrap text-[#ff3835] font-light font-['Noto_Sans_CJK_SC',sans-serif]";
  return (
    <div className="pointer-events-none absolute inset-0">
      <div className="absolute top-[150px] left-[22px] h-[31px] w-[164px] border-3 border-[#ff3835]" />
      <div className="absolute top-[206px] left-[537px] h-[71px] w-[192px] border-3 border-[#ff3835]" />
      <div className="absolute top-[281px] left-[817px] h-[27px] w-[458px] border-3 border-[#ff3835]" />
      <svg viewBox="0 0 126 54" className="absolute top-[166px] left-[169px] h-[54px] w-[126px]" aria-hidden="true">
        <path d="M0 1l1-1 108 43 3-6 13 13-18 3 1-5z" fill="#ff3835" />
      </svg>
      <svg viewBox="0 0 108 84" className="absolute top-[151px] left-[705px] h-[84px] w-[108px]" aria-hidden="true">
        <path d="M0 82l1 1L101 14l3 4L108 1 89 5l4 4z" fill="#ff3835" />
      </svg>
      <p className={note + " top-[205px] left-[297px]"}>拖拽到窗口新建物理材质</p>
      <p className={note + " top-[136px] left-[816px]"}>
        右击修改<span className="font-['Liberation_Mono',monospace] text-[13px]">Standard</span>材质为物理材质
      </p>
    </div>
  );
}

export default function App() {
  return (
    <div className={"relative flex h-screen w-full flex-col overflow-hidden bg-[#444] text-[11px] leading-4 text-[#eee] " + uiFont}>
      <Defs />
      <header className="flex h-[22px] shrink-0 items-center bg-white pr-5 pl-0.5">
        <MaxLogo />
        <h1 className="ml-[5px] text-[13px] leading-4 text-[#999]">Slate Material Editor</h1>
        <div className="ml-auto flex items-center gap-9">
          <button type="button" aria-label="Minimize"><svg viewBox="0 0 10 10" className="h-2.5 w-2.5"><path d="M0 4.500h10" stroke="#888" /></svg></button>
          <button type="button" aria-label="Restore"><svg viewBox="0 0 10 10" className="h-2.5 w-2.5" fill="none"><path d="M.5 2.500h7v7h-7zM2.500 2.500v-2h7v7h-2" stroke="#888" /></svg></button>
          <button type="button" aria-label="Close window"><svg viewBox="0 0 10 10" className="h-2.5 w-2.5"><path d="M0 0l10 10M10 0L0 10" stroke="#888" /></svg></button>
        </div>
      </header>
      <nav className="flex h-[21px] shrink-0 items-center gap-3 border-b-2 border-[#f0f0f0] bg-white pl-[7px] text-[13px] text-[#666]">
        {["Modes", "Material", "Edit", "Select", "View", "Options", "Tools", "Utilities"].map((m) => (
          <button key={m} type="button" className="leading-4">{m}</button>
        ))}
      </nav>
      <Toolbar />
      <main className="flex min-h-0 flex-1 border-t border-[#0c0c0c] pb-px">
        <aside className="flex w-[180px] shrink-0 flex-col border-r border-l-2 border-[#0c0c0c]">
          <PanelTitle>Material/Map Browser</PanelTitle>
          <div className="shrink-0 pr-[3px] pb-1">
            <Search id="panel-search" />
          </div>
          <div className="mb-0.5 ml-px flex min-h-0 flex-1 border-y border-l border-[#0c0c0c]">
            <div className="min-w-0 flex-1 overflow-hidden border-r border-[#0c0c0c]">
              <Section title="Materials">
                <Group title="General" items={generalMaterials} selected />
                <Group title="Scanline" items={scanline("Advanced Lighting…")} />
              </Section>
              <Section title="Maps">
                <Group title="General" items={maps} />
              </Section>
            </div>
            <ScrollBar thumb="h-[463px]" />
          </div>
        </aside>
        <div className="w-1 shrink-0" />
        <div className="flex min-w-0 flex-1 flex-col border-x border-b border-l-2 border-[#0c0c0c]">
          <div className={"flex h-[19px] shrink-0 bg-[#383838] " + arial}>
            <button type="button" className="h-full w-[71px] rounded-t-[2px] border border-b-0 border-[#666] border-r-black bg-[#444] pl-[7px] text-left text-[12px] leading-4 font-bold text-white italic [text-shadow:1px_1px_1px_#000]">
              View1
            </button>
            <div className="flex-1 border-b border-black" />
          </div>
          <div className="h-[3px] shrink-0" />
          <Canvas />
        </div>
        <div className="w-1 shrink-0" />
        <div className="flex w-[345px] shrink-0 flex-col gap-[5px] pr-px">
          <section className="border border-t-0 border-[#0c0c0c]">
            <PanelTitle>Navigator</PanelTitle>
            <Navigator />
          </section>
          <section className="flex-1 border border-[#0c0c0c]">
            <PanelTitle>{"pbrTest  ( Physical Material )"}</PanelTitle>
            <div className="px-[5px] pt-1 pb-[5px]">
              <input aria-label="Material name" defaultValue="pbrTest" className="block h-[19px] w-full border border-[#4a4a4a] bg-[#646464] pb-0.5 pl-0.5 leading-4 text-[#ddd] outline-none" />
            </div>
            <div className="h-0.5" />
            <Params />
          </section>
        </div>
      </main>
      <StatusBar />
      <Taskbar />
      <Dialog />
      <Annotations />
    </div>
  );
}
